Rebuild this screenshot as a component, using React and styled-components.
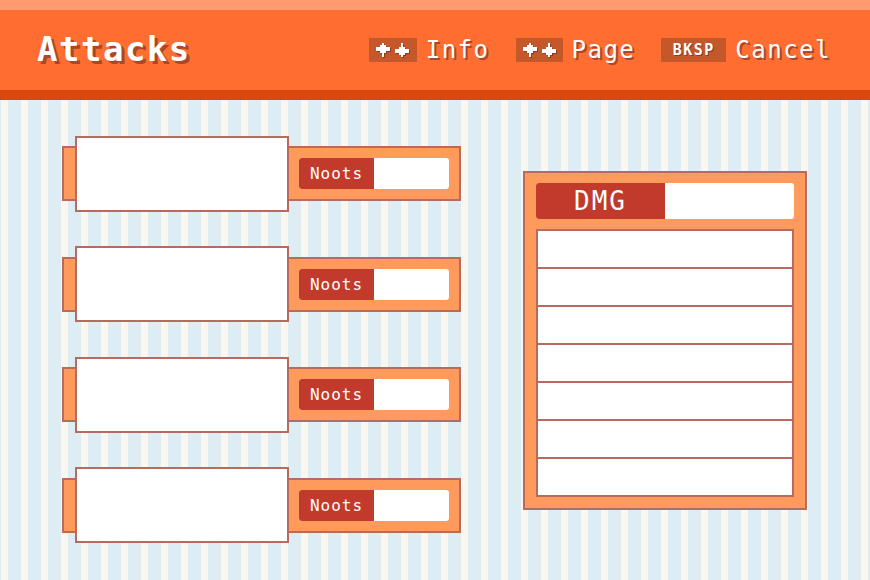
import React from "react";
import styled, { createGlobalStyle } from "styled-components";

const Global = createGlobalStyle`
  html, body { margin: 0; padding: 0; }
  body {
    width: 870px;
    height: 580px;
    overflow: hidden;
    font-family: "DejaVu Sans Mono", "Liberation Mono", monospace;
    background: repeating-linear-gradient(
      90deg,
      #deecf4 0px,
      #deecf4 1px,
      #f9f7ef 1px,
      #f9f7ef 8px,
      #deecf4 8px,
      #deecf4 20px
    );
  }
`;

const Page = styled.div`
  width: 870px;
  height: 580px;
  display: flex;
  flex-direction: column;
`;

const Header = styled.header`
  box-sizing: border-box;
  height: 100px;
  background: #ff6d30;
  border-top: 10px solid #ff9b6e;
  border-bottom: 10px solid #d9490f;
  display: flex;
  align-items: center;
  justify-content: space-between;
  padding: 0 39px 0 37px;
`;

const Title = styled.h1`
  margin: 0;
  font-size: 34px;
  font-weight: bold;
  letter-spacing: 1.5px;
  color: #ffffff;
  text-shadow: 3px 3px 0 #a8472b;
  line-height: 1;
  margin-top: -2px;
`;

const Nav = styled.nav`
  display: flex;
  align-items: center;
  gap: 26px;
`;

const NavItem = styled.div`
  display: flex;
  align-items: center;
  gap: 9px;
`;

const Key = styled.span`
  box-sizing: border-box;
  height: 24px;
  width: ${(p) => p.$w}px;
  background: #c5582b;
  display: flex;
  align-items: center;
  justify-content: center;
  gap: 5px;
  color: #fff;
  font-size: 15px;
  font-weight: bold;
  letter-spacing: 1.5px;
  text-shadow: 1px 1px 0 #8e3a1e;
`;

const NavLabel = styled.span`
  font-size: 24px;
  letter-spacing: 1.5px;
  color: #fff;
  text-shadow: 2px 2px 0 #a8472b;
  line-height: 1;
`;

const Main = styled.main`
  flex: 1;
  display: flex;
  align-items: flex-start;
  padding: 46px 0 0 62px;
  gap: 62px;
`;

const Moves = styled.div`
  display: flex;
  flex-direction: column;
  gap: 55.5px;
`;

const Bar = styled.div`
  box-sizing: border-box;
  width: 399px;
  height: 55px;
  background: #fe9a5c;
  border: 2px solid #b76a5e;
  display: flex;
  align-items: center;
  padding: 0 10px 0 11px;
  gap: 10px;
`;

const NameBox = styled.div`
  box-sizing: border-box;
  flex: none;
  width: 214px;
  height: 76px;
  background: #fff;
  border: 2px solid #b76a5e;
`;

const Pill = styled.div`
  flex: 1;
  height: 31px;
  border-radius: 3px;
  background: #fff;
  display: flex;
  overflow: hidden;
`;

const PillTag = styled.span`
  width: ${(p) => p.$w}px;
  background: #c13a2c;
  color: #fff;
  display: flex;
  align-items: center;
  justify-content: center;
  font-size: ${(p) => p.$size}px;
  letter-spacing: ${(p) => p.$ls}px;
`;

const Panel = styled.section`
  box-sizing: border-box;
  width: 284px;
  height: 339px;
  margin-top: 25px;
  background: #fe9a5c;
  border: 2px solid #b76a5e;
  padding: 10px 11px 11px 11px;
  display: flex;
  flex-direction: column;
  gap: 10px;
`;

const DmgPill = styled(Pill)`
  flex: none;
  height: 36px;
`;

const List = styled.div`
  box-sizing: border-box;
  border: 2px solid #b76a5e;
  background: #fff;
  display: flex;
  flex-direction: column;
  height: 268px;
`;

const ListRow = styled.div`
  flex: 1;
  border-top: ${(p) => (p.$first ? "none" : "2px solid #b76a5e")};
`;

const Arrow = ({ down }) => (
  <svg
    width="14"
    height="14"
    viewBox="0 0 7 7"
    shapeRendering="crispEdges"
    style={{ filter: "drop-shadow(1px 1px 0 #8e3a1e)" }}
  >
    <g fill="#fff" transform={down ? "rotate(180 3.5 3.5)" : undefined}>
      <rect x="3" y="0" width="1" height="1" />
      <rect x="2" y="1" width="3" height="1" />
      <rect x="0" y="2" width="7" height="2" />
      <rect x="2" y="4" width="3" height="1" />
      <rect x="3" y="5" width="1" height="2" />
    </g>
  </svg>
);

const moves = [0, 1, 2, 3];
const rows = [0, 1, 2, 3, 4, 5, 6];

export default function App() {
  return (
    <Page>
      <Global />
      <Header>
        <Title>Attacks</Title>
        <Nav>
          <NavItem>
            <Key $w={48}>
              <Arrow />
              <Arrow down />
            </Key>
            <NavLabel>Info</NavLabel>
          </NavItem>
          <NavItem>
            <Key $w={47}>
              <Arrow />
              <Arrow down />
            </Key>
            <NavLabel>Page</NavLabel>
          </NavItem>
          <NavItem>
            <Key $w={65}>BKSP</Key>
            <NavLabel>Cancel</NavLabel>
          </NavItem>
        </Nav>
      </Header>
      <Main>
        <Moves>
          {moves.map((m) => (
            <Bar key={m}>
              <NameBox />
              <Pill>
                <PillTag $w={75} $size={16} $ls={1}>
                  Noots
                </PillTag>
              </Pill>
            </Bar>
          ))}
        </Moves>
        <Panel>
          <DmgPill>
            <PillTag $w={129} $size={26} $ls={2}>
              DMG
            </PillTag>
          </DmgPill>
          <List>
            {rows.map((r) => (
              <ListRow key={r} $first={r === 0} />
            ))}
          </List>
        </Panel>
      </Main>
    </Page>
  );
}
